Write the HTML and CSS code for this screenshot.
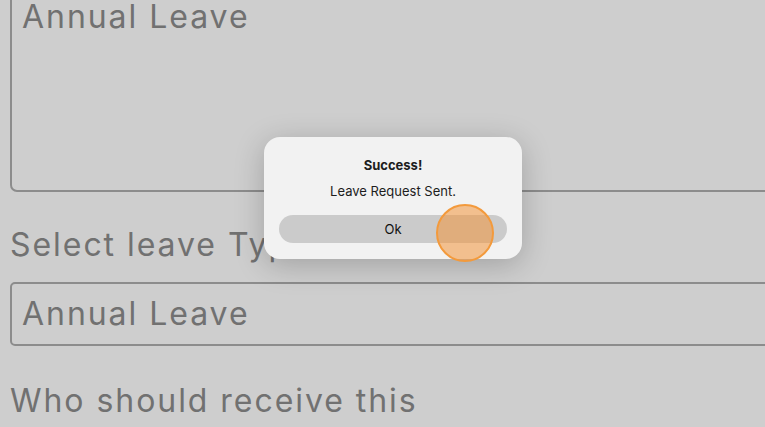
FILE: index.html
```html
<!DOCTYPE html>
<html>
<head>
<meta charset="utf-8">
<link rel="stylesheet" href="styles.css">
</head>
<body>
<div class="form">
  <div class="box box-area"><span class="value">Annual Leave</span></div>
  <div class="label label-type">Select leave Type</div>
  <div class="box box-input"><span class="value">Annual Leave</span></div>
  <div class="label label-who">Who should receive this</div>
</div>
<div class="dialog">
  <div class="title">Success!</div>
  <div class="message">Leave Request Sent.</div>
  <div class="button">Ok</div>
</div>
<div class="touch"></div>
</body>
</html>
```
FILE: styles.css
```css
html, body {
  margin: 0;
  padding: 0;
  width: 765px;
  height: 427px;
  overflow: hidden;
  background: #cecece;
  font-family: Inter, "Liberation Sans", sans-serif;
}
.form {
  display: flex;
  flex-direction: column;
  padding-left: 10px;
  margin-right: -30px;
}
.box {
  border: 2px solid #8c8c8c;
  box-sizing: border-box;
  padding-left: 10px;
  color: #717171;
  font-size: 32px;
  letter-spacing: 1.95px;
}
.box-area {
  margin-top: -30px;
  height: 222px;
  border-radius: 7px;
  line-height: 40px;
  padding-top: 25px;
}
.box-input {
  height: 64px;
  border-radius: 5px;
  line-height: 60px;
  margin-top: 17px;
}
.label {
  color: #717171;
  font-size: 32px;
  letter-spacing: 1.95px;
  line-height: 40px;
}
.label-type {
  margin-top: 33px;
}
.label-who {
  margin-top: 35px;
}
.dialog {
  position: absolute;
  left: 264px;
  top: 137px;
  width: 258px;
  height: 122px;
  box-sizing: border-box;
  background: #f2f2f2;
  border-radius: 16px;
  box-shadow: 0 6px 30px rgba(0,0,0,0.22);
  display: flex;
  flex-direction: column;
  align-items: center;
  padding: 20px 15px 0;
  color: #1d1d1d;
  font-size: 13px;
}
.title {
  font-weight: 700;
  line-height: 16px;
}
.message {
  margin-top: 10px;
  line-height: 16px;
}
.button {
  margin-top: 16px;
  align-self: stretch;
  height: 28px;
  border-radius: 14px;
  background: #cbcbcb;
  display: flex;
  align-items: center;
  justify-content: center;
  color: #111;
}
.touch {
  position: absolute;
  left: 436px;
  top: 204px;
  width: 58px;
  height: 58px;
  box-sizing: border-box;
  border-radius: 50%;
  border: 2px solid #f39a3c;
  background: rgba(243, 150, 60, 0.55);
}
```
